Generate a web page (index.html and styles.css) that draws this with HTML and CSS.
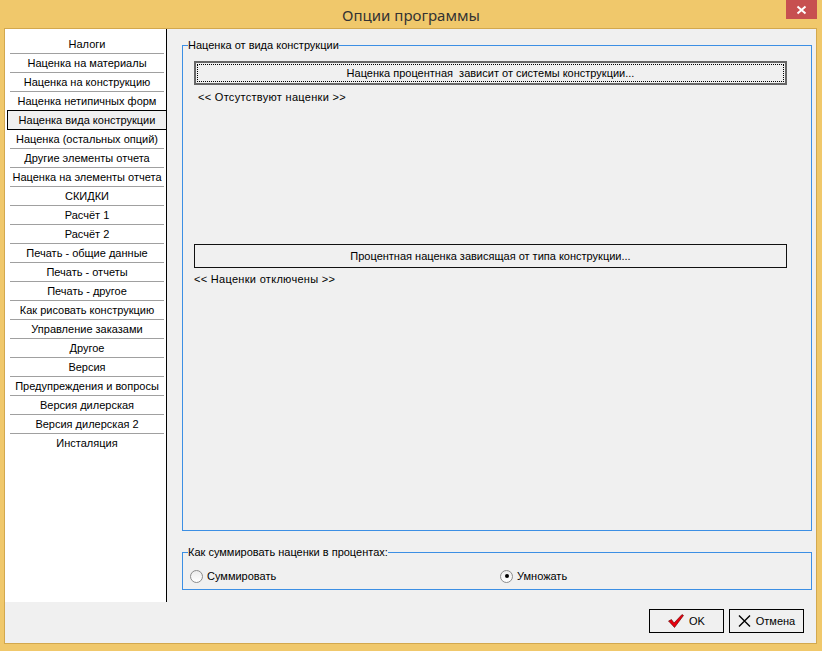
FILE: index.html
```html
<html>
    <head>
        <title>Опции программы</title>
    <link rel="stylesheet" href="styles.css">
    </head>
    <body>
        <div class="window">
            <div class="titlebar">
                <span class="title">Опции программы</span>
                <button class="close">
                    <svg width="11" height="10" viewBox="0 0 11 10"><path d="M1.5 1.5 L9.5 8.5 M9.5 1.5 L1.5 8.5" stroke="#fff" stroke-width="2"/></svg>
                </button>
            </div>
            <div class="client">
                <div class="main">
                    <ul class="pages">
                        <li>Налоги</li>
                        <li>Наценка на материалы</li>
                        <li>Наценка на конструкцию</li>
                        <li>Наценка нетипичных форм</li>
                        <li class="active">Наценка вида конструкции</li>
                        <li>Наценка (остальных опций)</li>
                        <li>Другие элементы отчета</li>
                        <li>Наценка на элементы отчета</li>
                        <li>СКИДКИ</li>
                        <li>Расчёт 1</li>
                        <li>Расчёт 2</li>
                        <li>Печать - общие данные</li>
                        <li>Печать - отчеты</li>
                        <li>Печать - другое</li>
                        <li>Как рисовать конструкцию</li>
                        <li>Управление заказами</li>
                        <li>Другое</li>
                        <li>Версия</li>
                        <li>Предупреждения и вопросы</li>
                        <li>Версия дилерская</li>
                        <li>Версия дилерская 2</li>
                        <li>Инсталяция</li>
                    </ul>
                    <div class="content">
                        <fieldset class="group markup">
                            <legend>Наценка от вида конструкции</legend>
                            <button class="wide focused"><span>Наценка процентная  зависит от системы конструкции...</span></button>
                            <div class="note">&lt;&lt; Отсутствуют наценки &gt;&gt;</div>
                            <button class="wide second">Процентная наценка зависящая от типа конструкции...</button>
                            <div class="note off">&lt;&lt; Наценки отключены &gt;&gt;</div>
                        </fieldset>
                        <fieldset class="group sum">
                            <legend>Как суммировать наценки в процентах:</legend>
                            <div class="radios">
                                <label class="radio first"><span class="dot"></span>Суммировать</label>
                                <label class="radio checked"><span class="dot"></span>Умножать</label>
                            </div>
                        </fieldset>
                    </div>
                </div>
                <div class="footer">
                    <button class="btn">
                        <svg width="16" height="14" viewBox="0 0 16 14"><path d="M0.5 7 L3.5 5.5 L6 9 L14 0.5 L15.5 1.5 L6.5 13.5 Z" fill="#e8000e" stroke="#5a0000" stroke-width="0.6"/></svg>
                        OK
                    </button>
                    <button class="btn">
                        <svg width="13" height="12" viewBox="0 0 13 12"><path d="M1 0.5 L12 11.5 M12 0.5 L1 11.5" stroke="#000" stroke-width="1.4"/></svg>
                        Отмена
                    </button>
                </div>
            </div>
        </div>
    </body>
</html>
```

FILE: styles.css
```css
body{
    margin:0;
    background-color:#f0c86b;
    font-family:"Liberation Sans", Arial, sans-serif;
    font-size:11px;
    color:#000;
}
.window{
    width:822px;
    height:651px;
}
.titlebar{
    height:28px;
    display:flex;
    justify-content:center;
    align-items:center;
    position:relative;
}
.title{
    font-family:"Noto Sans", "Liberation Sans", sans-serif;
    font-size:15px;
    color:#333;
    margin-top:1px;
}
.close{
    position:absolute;
    right:5px;
    top:0;
    width:31px;
    height:19px;
    border:0;
    padding:0;
    background-color:#c75050;
    display:flex;
    justify-content:center;
    align-items:center;
}
.client{
    margin:0 5px 0 4px;
    border:1px solid #d3a84d;
    background-color:#f0f0f0;
    height:614px;
    display:flex;
    flex-direction:column;
}
.main{
    display:flex;
    height:573px;
}
.pages{
    list-style:none;
    margin:0;
    padding:6px 0 0;
    width:161px;
    background-color:#fff;
    border-right:1px solid #000;
}
.pages li{
    height:18px;
    line-height:18px;
    margin:0 2px 0 5px;
    border-bottom:1px solid #a0a0a0;
    text-align:center;
    white-space:nowrap;
}
.pages li.active{
    margin:-1px -1px 0 2px;
    border:1px solid #000;
    background-color:#f0f0f0;
}
.pages li:last-child{
    border-bottom:0;
}
.content{
    flex:1;
    padding:9px 4px 0 15px;
}
.group{
    margin:0;
    padding:0;
    min-width:0;
    border:1px solid #3c8fe4;
    box-sizing:border-box;
}
.group legend{
    padding:0;
    margin-left:5px;
    line-height:14px;
}
.markup{
    height:493px;
}
button{
    font:inherit;
    color:#000;
}
.wide{
    display:block;
    width:593px;
    height:24px;
    margin:9px 0 0 11px;
    padding:0;
    background-color:#f0f0f0;
    border:1px solid #111;
    white-space:pre;
}
.focused{
    border:2px solid #666;
    padding:1px;
}
.focused span{
    display:flex;
    justify-content:center;
    align-items:center;
    height:100%;
    box-sizing:border-box;
    border:1px dotted #000;
}
.note{
    margin:5px 0 0 15px;
    line-height:14px;
    letter-spacing:0.3px;
}
.wide.second{
    margin-top:140px;
}
.note.off{
    margin:4px 0 0 11px;
}
.sum{
    margin-top:14px;
    height:45px;
}
.radios{
    display:flex;
    margin:10px 0 0 7px;
    line-height:14px;
}
.radio{
    display:flex;
    align-items:center;
}
.radio.first{
    width:310px;
}
.dot{
    width:11px;
    height:11px;
    border:1px solid #8c8c8c;
    border-radius:50%;
    background:linear-gradient(#ececec, #fff);
    margin-right:4px;
    display:flex;
    justify-content:center;
    align-items:center;
}
.checked .dot::after{
    content:"";
    width:4px;
    height:4px;
    border-radius:50%;
    background-color:#000;
}
.footer{
    flex:1;
    display:flex;
    justify-content:flex-end;
    gap:5px;
    padding:7px 12px 0 0;
}
.btn{
    width:75px;
    height:24px;
    border:1px solid #000;
    background-color:#f0f0f0;
    padding:0;
    display:flex;
    justify-content:center;
    align-items:center;
    gap:5px;
}
```
